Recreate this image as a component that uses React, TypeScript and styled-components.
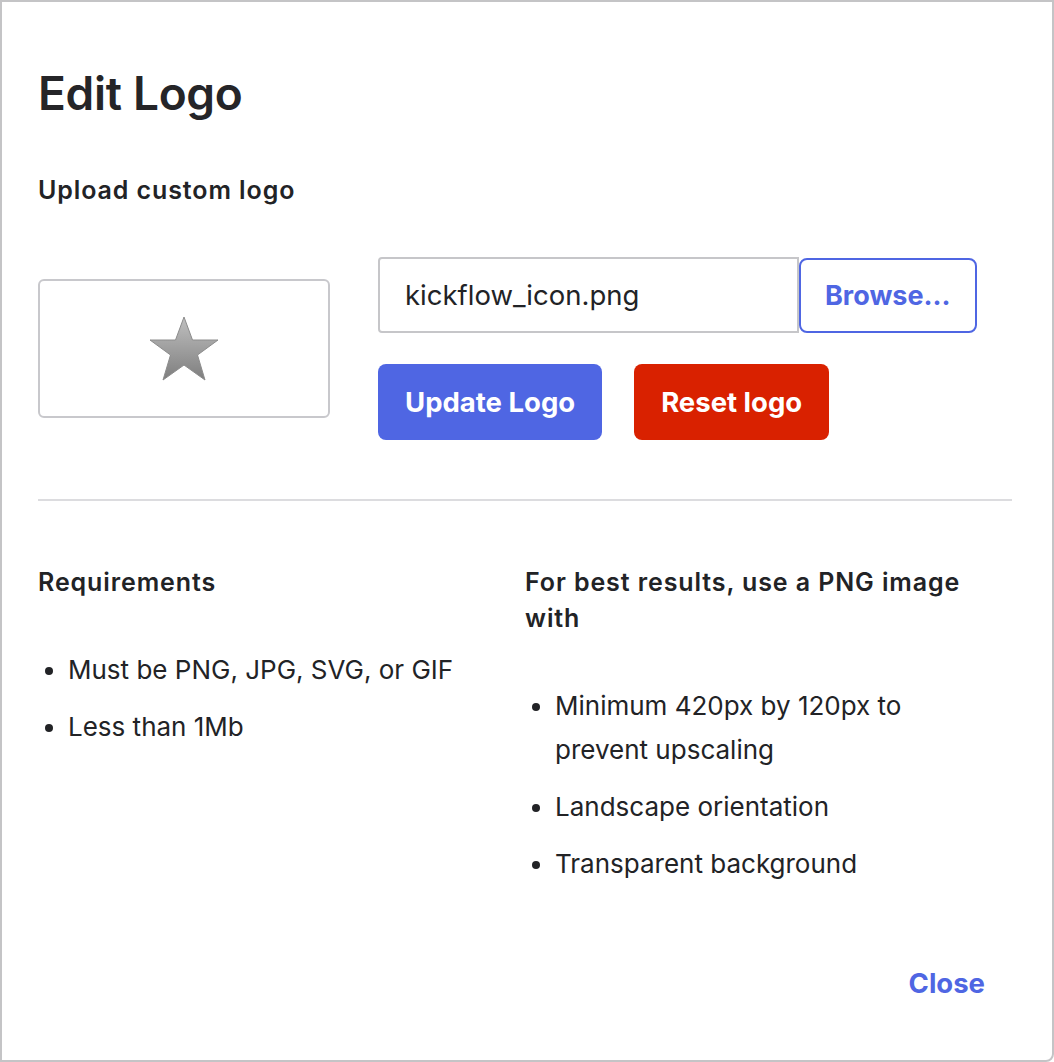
import styled, { createGlobalStyle } from "styled-components";

const GlobalStyle = createGlobalStyle`
    html, body {
        margin: 0;
        padding: 0;
        background: #ffffff;
    }
    * {
        box-sizing: border-box;
    }
`;

const Dialog = styled.div`
    width: 1054px;
    height: 1062px;
    display: flex;
    flex-direction: column;
    padding: 63px 40px 0 36px;
    border: 2px solid #c4c4c6;
    border-radius: 0 0 8px 0;
    background: #ffffff;
    color: #222326;
    font-family: Inter, "Noto Sans", sans-serif;
`;

const Title = styled.h1`
    margin: 0;
    font-size: 46px;
    line-height: 56px;
    font-weight: 600;
    letter-spacing: -0.3px;
    color: #252528;
`;

const SectionLabel = styled.h2`
    margin: 54px 0 0 0;
    font-size: 25px;
    line-height: 30px;
    font-weight: 600;
    letter-spacing: 0.9px;
    color: #222326;
`;

const UploadRow = styled.div`
    display: flex;
    flex-direction: row;
    align-items: center;
    gap: 48px;
    margin-top: 52px;
`;

const LogoPreview = styled.div`
    display: flex;
    width: 292px;
    height: 139px;
    justify-content: center;
    align-items: center;
    border: 2px solid #c8c8cc;
    border-radius: 6px;
`;

const UploadControls = styled.div`
    display: flex;
    flex-direction: column;
    gap: 31px;
`;

const InARow = styled.div`
    display: flex;
    flex-direction: row;
    align-items: center;
`;

const FileInput = styled.div`
    display: flex;
    align-items: center;
    width: 421px;
    height: 76px;
    padding-left: 25px;
    border: 2px solid #c6c6c9;
    border-radius: 4px 0 0 4px;
    font-size: 27.5px;
    color: #222326;
`;

const Button = styled.button<{ $variant: "outline" | "primary" | "danger" | "link" }>`
    display: flex;
    justify-content: center;
    align-items: center;
    height: 76px;
    padding: 0 25px;
    border-radius: 8px;
    font-family: Inter, "Noto Sans", sans-serif;
    font-weight: 700;
    font-size: 27.5px;
    cursor: pointer;
    border: 2px solid transparent;

    ${({ $variant }) => $variant === "outline" && `
        height: 75px;
        border-color: #4f66e3;
        background: #ffffff;
        color: #4f66e3;
        font-size: 27px;
        padding: 0 24px;
    `}
    ${({ $variant }) => $variant === "primary" && `
        background: #4f66e3;
        color: #ffffff;
    `}
    ${({ $variant }) => $variant === "danger" && `
        background: #d92100;
        color: #ffffff;
    `}
    ${({ $variant }) => $variant === "link" && `
        background: transparent;
        color: #4f66e3;
        padding: 0;
        height: auto;
    `}
`;

const ButtonRow = styled.div`
    display: flex;
    flex-direction: row;
    gap: 32px;
`;

const Divider = styled.hr`
    width: 100%;
    margin: 59px 0 0 0;
    border: none;
    border-top: 2px solid #dcdcdf;
`;

const InfoGrid = styled.div`
    display: grid;
    grid-template-columns: 487px 440px;
    margin-top: 63px;
`;

const InfoColumn = styled.div`
    display: flex;
    flex-direction: column;
`;

const InfoHeading = styled.h3`
    margin: 0;
    font-size: 25px;
    line-height: 36px;
    font-weight: 600;
    letter-spacing: 0.9px;
    color: #222326;
`;

const BulletList = styled.ul`
    margin: 48px 0 0 0;
    padding-left: 30px;
    font-size: 26px;
    line-height: 44px;
    color: #222326;

    li {
        margin-bottom: 13px;
    }
`;

const Footer = styled.div`
    display: flex;
    justify-content: flex-end;
    margin-top: auto;
    padding: 0 25px 58px 0;
`;

const StarIcon = () => (
    <svg width="72" height="68" viewBox="0 0 72 68">
        <defs>
            <linearGradient id="starFill" x1="0" y1="0" x2="0" y2="1">
                <stop offset="0" stopColor="#c0c0c0" />
                <stop offset="1" stopColor="#7e7e7e" />
            </linearGradient>
        </defs>
        <polygon
            points="36,2 44.5,25 70,25 49.5,40 57,65 36,50 15,65 22.5,40 2,25 27.5,25"
            fill="url(#starFill)"
            stroke="#8c8c8c"
            strokeWidth="1"
            strokeLinejoin="round"
        />
    </svg>
);

export const App = () => {
    return (
        <>
            <GlobalStyle />
            <Dialog>
                <Title>Edit Logo</Title>
                <SectionLabel>Upload custom logo</SectionLabel>
                <UploadRow>
                    <LogoPreview>
                        <StarIcon />
                    </LogoPreview>
                    <UploadControls>
                        <InARow>
                            <FileInput>kickflow_icon.png</FileInput>
                            <Button $variant="outline">Browse...</Button>
                        </InARow>
                        <ButtonRow>
                            <Button $variant="primary">Update Logo</Button>
                            <Button $variant="danger">Reset logo</Button>
                        </ButtonRow>
                    </UploadControls>
                </UploadRow>
                <Divider />
                <InfoGrid>
                    <InfoColumn>
                        <InfoHeading>Requirements</InfoHeading>
                        <BulletList>
                            <li>Must be PNG, JPG, SVG, or GIF</li>
                            <li>Less than 1Mb</li>
                        </BulletList>
                    </InfoColumn>
                    <InfoColumn>
                        <InfoHeading>For best results, use a PNG image with</InfoHeading>
                        <BulletList>
                            <li>Minimum 420px by 120px to prevent upscaling</li>
                            <li>Landscape orientation</li>
                            <li>Transparent background</li>
                        </BulletList>
                    </InfoColumn>
                </InfoGrid>
                <Footer>
                    <Button $variant="link">Close</Button>
                </Footer>
            </Dialog>
        </>
    );
};

export default App;
